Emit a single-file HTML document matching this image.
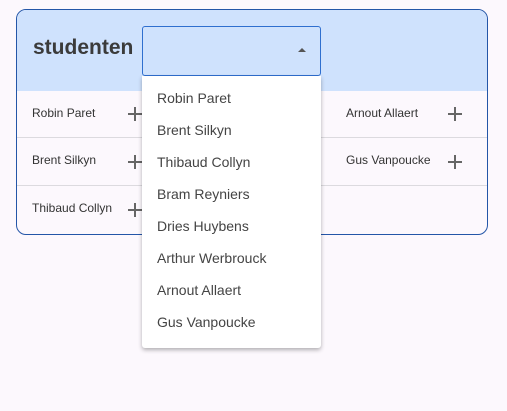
<!DOCTYPE html>
<html><head><style>
body{margin:0;width:507px;height:411px;background:#fcf8fd;font-family:"Liberation Sans",sans-serif;position:relative;overflow:hidden}
.card{position:absolute;left:16px;top:9px;width:470px;height:224px;border:1px solid #2456a8;border-radius:10px;overflow:hidden;background:#fcf8fd}
.hdr{position:absolute;left:0;top:0;width:100%;height:81px;background:#cfe2fd}
.title{position:absolute;left:16px;top:26px;font-size:21px;font-weight:bold;color:#3b3b3b}
.line{position:absolute;left:0;width:100%;height:1px;background:#dcdadf}
.n{position:absolute;font-size:12px;color:#333}
.p{position:absolute;width:14px;height:14px}
.p:before{content:"";position:absolute;left:0;top:6px;width:14px;height:2px;background:#666}
.p:after{content:"";position:absolute;left:6px;top:0;width:2px;height:14px;background:#666}
.sel{position:absolute;left:142px;top:26px;width:177px;height:48px;border:1px solid #2f6fcf;border-radius:3px;background:#cfe2fd}
.tri{position:absolute;right:14px;top:21px;width:0;height:0;border-left:4px solid transparent;border-right:4px solid transparent;border-bottom:4px solid #555}
.dd{position:absolute;left:142px;top:76px;width:179px;height:272px;background:#fff;border-radius:0 0 3px 3px;box-shadow:0 2px 4px rgba(0,0,0,.3)}
.dd div{position:absolute;left:15px;font-size:14px;color:#444}
</style></head><body>
<div class="card">
<div class="hdr"></div>
<div class="title">studenten</div>
<div class="line" style="top:127px"></div>
<div class="line" style="top:175px"></div>
<div class="n" style="left:15px;top:96px">Robin Paret</div>
<div class="n" style="left:15px;top:143px">Brent Silkyn</div>
<div class="n" style="left:15px;top:191px">Thibaud Collyn</div>
<div class="p" style="left:111px;top:97px"></div>
<div class="p" style="left:111px;top:145px"></div>
<div class="p" style="left:111px;top:193px"></div>
<div class="n" style="left:329px;top:96px">Arnout Allaert</div>
<div class="n" style="left:329px;top:143px">Gus Vanpoucke</div>
<div class="p" style="left:431px;top:97px"></div>
<div class="p" style="left:431px;top:145px"></div>
</div>
<div class="sel"><div class="tri"></div></div>
<div class="dd">
<div style="top:14px">Robin Paret</div>
<div style="top:46px">Brent Silkyn</div>
<div style="top:78px">Thibaud Collyn</div>
<div style="top:110px">Bram Reyniers</div>
<div style="top:142px">Dries Huybens</div>
<div style="top:174px">Arthur Werbrouck</div>
<div style="top:206px">Arnout Allaert</div>
<div style="top:238px">Gus Vanpoucke</div>
</div>
</body></html>
